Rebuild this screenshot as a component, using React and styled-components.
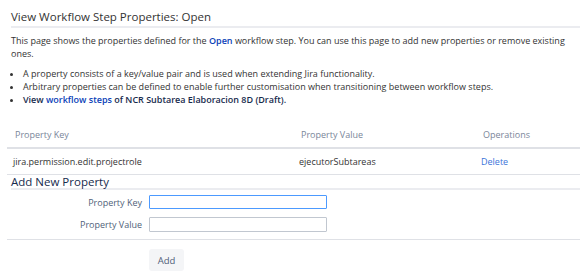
import React from "react";
import styled, { createGlobalStyle } from "styled-components";

const GlobalStyle = createGlobalStyle`
  html, body {
    margin: 0;
    padding: 0;
    background: #ffffff;
  }
  body {
    font-family: "Open Sans", "Noto Sans", sans-serif;
    font-size: 9px;
    color: #333333;
  }
`;

const Page = styled.div`
  width: 580px;
  padding: 10px 0 0 0;
  box-sizing: border-box;
`;

const Title = styled.h2`
  margin: 0 0 0 11px;
  padding: 0 0 2px 0;
  font-size: 11.5px;
  font-weight: 400;
  line-height: 14px;
  color: #333333;
  border-bottom: 2px solid #ebecf0;
`;

const Intro = styled.p`
  margin: 6px 10px 0 11px;
  line-height: 13px;
`;

const Bullets = styled.ul`
  margin: 7px 0 0 0;
  padding: 0 0 0 23px;
  line-height: 13px;
`;

const Link = styled.a`
  color: ${(p) => (p.$bold ? "#0b3fb8" : "#3b73d9")};
  font-weight: ${(p) => (p.$bold ? 600 : 400)};
  text-decoration: none;
`;

const Strong = styled.span`
  font-weight: 600;
  color: #172b4d;
`;

const Table = styled.table`
  margin: 16px 0 0 7px;
  width: 573px;
  border-collapse: collapse;
  table-layout: fixed;
`;

const Th = styled.th`
  text-align: left;
  font-weight: 500;
  color: #7a869a;
  padding: 6px 8px;
  line-height: 13px;
  border-bottom: 2px solid #dfe1e6;
`;

const Td = styled.td`
  padding: 6px;
  line-height: 13px;
  border-bottom: 1px solid #dfe1e6;
`;

const Section = styled.h3`
  margin: 0 0 0 11px;
  padding: 0;
  font-size: 11.5px;
  font-weight: 500;
  line-height: 13px;
  color: #172b4d;
  border-bottom: 2px solid #ebecf0;
`;

const Form = styled.form`
  margin: 0 0 0 7px;
`;

const Fields = styled.div`
  display: grid;
  grid-template-columns: 135px 178px;
  column-gap: 7px;
  row-gap: 8px;
  padding: 5px 0 7px 0;
  border-bottom: 1px solid #dfe1e6;
  align-items: center;
`;

const Label = styled.label`
  text-align: right;
  color: #505f79;
  line-height: 13px;
`;

const Input = styled.input`
  box-sizing: border-box;
  height: ${(p) => (p.$focus ? "14px" : "15px")};
  width: 178px;
  margin: 0;
  padding: 0 3px;
  font: inherit;
  border: 1px solid ${(p) => (p.$focus ? "#4c9aff" : "#c1c7d0")};
  border-radius: 1px;
  outline: none;
  background: #fff;
`;

const Actions = styled.div`
  display: flex;
  padding: 9px 0 0 142px;
`;

const Button = styled.button`
  width: 35px;
  height: 22px;
  border: none;
  border-radius: 3px;
  background: #f4f5f7;
  color: #505f79;
  font: inherit;
  font-size: 9.5px;
  padding: 0;
`;

export default function App() {
  return (
    <Page>
      <GlobalStyle />
      <Title>View Workflow Step Properties: Open</Title>
      <Intro>
        This page shows the properties defined for the{" "}
        <Link $bold href="#">Open</Link> workflow step. You can use this page
        to add new properties or remove existing ones.
      </Intro>
      <Bullets>
        <li>A property consists of a key/value pair and is used when extending Jira functionality.</li>
        <li>Arbitrary properties can be defined to enable further customisation when transitioning between workflow steps.</li>
        <li>
          <Strong>
            View <Link $bold href="#">workflow steps</Link> of NCR Subtarea
            Elaboracion 8D (Draft).
          </Strong>
        </li>
      </Bullets>
      <Table>
        <colgroup>
          <col style={{ width: 286 }} />
          <col style={{ width: 182 }} />
          <col />
        </colgroup>
        <thead>
          <tr>
            <Th>Property Key</Th>
            <Th>Property Value</Th>
            <Th>Operations</Th>
          </tr>
        </thead>
        <tbody>
          <tr>
            <Td>jira.permission.edit.projectrole</Td>
            <Td>ejecutorSubtareas</Td>
            <Td>
              <Link href="#">Delete</Link>
            </Td>
          </tr>
        </tbody>
      </Table>
      <Section>Add New Property</Section>
      <Form onSubmit={(e) => e.preventDefault()}>
        <Fields>
          <Label htmlFor="k">Property Key</Label>
          <Input id="k" $focus autoFocus />
          <Label htmlFor="v">Property Value</Label>
          <Input id="v" />
        </Fields>
        <Actions>
          <Button type="submit">Add</Button>
        </Actions>
      </Form>
    </Page>
  );
}
